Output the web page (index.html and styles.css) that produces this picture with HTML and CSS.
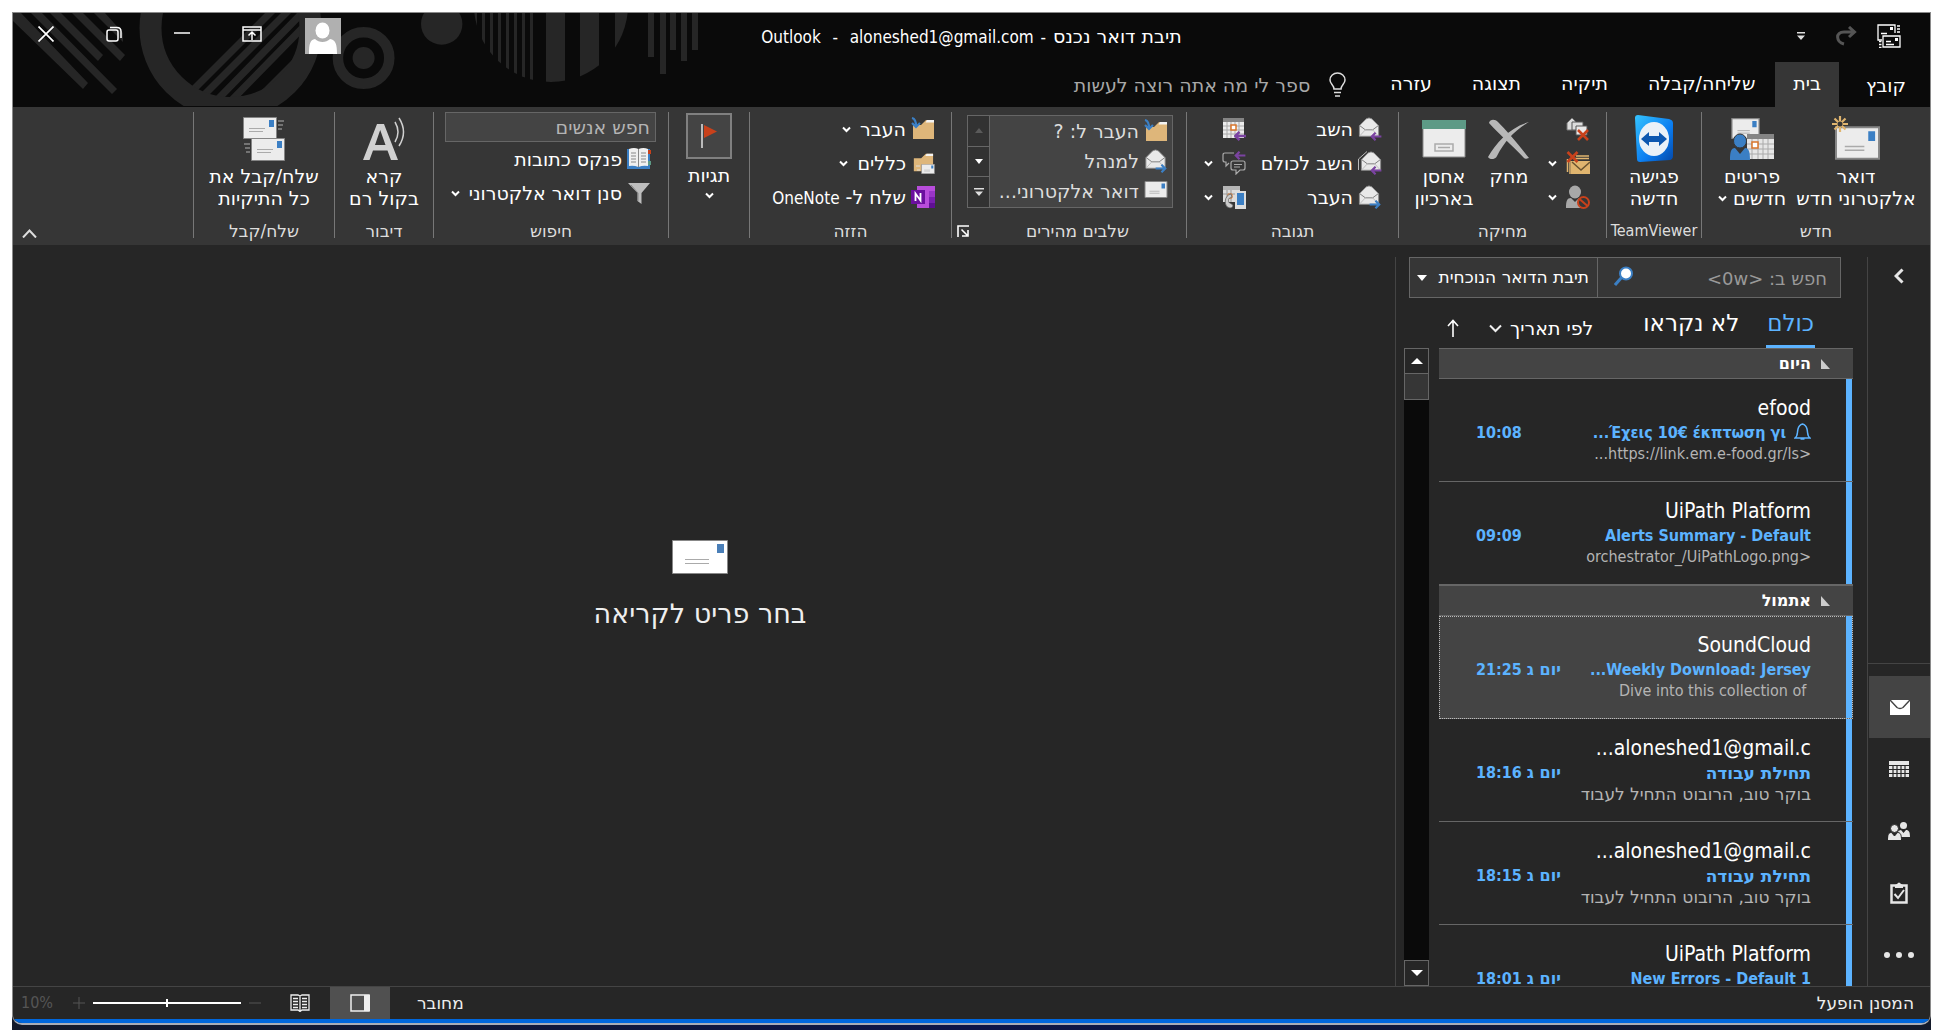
FILE: index.html
```html
<!DOCTYPE html>
<html lang="he" dir="rtl">
<head>
<meta charset="utf-8">
<title>תיבת דואר נכנס - Outlook</title>
<link rel="stylesheet" href="styles.css">
</head>
<body>
<svg class="sprite" aria-hidden="true">
  <symbol id="caret" viewBox="0 0 9 7"><path d="M1 1.500l3.500 3.500L8 1.500" fill="none" stroke="#fff" stroke-width="2"/></symbol>
  <symbol id="open-env" viewBox="0 0 24 24"><path d="M1.500 9.500L9 2q3-2 6 0l7.500 7.500V21h-21z" fill="#e9e9e9" stroke="#8a8a8a"/><path d="M2 9.500l6 4.500h8l6-4.500" fill="none" stroke="#777"/><path d="M8 14L2 20.500M16 14l6 6.500" stroke="#bbb"/></symbol>
  <symbol id="arrow-in" viewBox="0 0 12 10"><path d="M1 5h11M5.500.800L1.300 5l4.200 4.200" fill="none" stroke="#7b43a1" stroke-width="2.400"/></symbol>
  <symbol id="arrow-out" viewBox="0 0 12 10"><path d="M11 5H0M6.500.800L10.700 5 6.500 9.200" fill="none" stroke="#3b7fc4" stroke-width="2.400"/></symbol>
  <symbol id="envelope" viewBox="0 0 46 34"><path d="M1 1h44v32H1z" fill="#ececec" stroke="#858585" stroke-width="2"/><path d="M34 5h7v10h-7z" fill="#3b7fc4"/><path d="M10 20.500h20M10 24.500h20" stroke="#aaa" stroke-width="1.500"/></symbol>
  <symbol id="folder" viewBox="0 0 24 24"><path d="M2 8h8l5-5h8v19H2z" fill="#deb67a"/><path d="M14.500 5.500L16 3h7v2.500z" fill="#f3f3f3"/></symbol>
  <symbol id="redx" viewBox="0 0 12 12"><path d="M1 1l10 10M11 1L1 11" stroke="#c8411b" stroke-width="2.600"/></symbol>
</svg>
<div class="page">
<div class="window">
  <header class="titlebar">
    <svg class="art" viewBox="13 13 720 94" aria-hidden="true">
      <defs>
        <clipPath id="inner"><circle cx="230.500" cy="28" r="70"/></clipPath>
        <clipPath id="disc"><circle cx="551" cy="5" r="77"/></clipPath>
        <clipPath id="flat"><path d="M13 13h720v93H13z"/></clipPath>
      </defs>
      <g fill="#262626">
        <path d="M13 13h8l67 70-5 6-70-68zM31 13h11l75 76-5 5zM50 13h11l42 42-5 6zM72 13h11l42 42-5 6zM94 13h11l18 20v9z"/>
        <path d="M265 13h10l-82 82h-10zM281 13h10l-82 82h-10zM297 13h10l-82 84h-10zM312 13h10l-90 92h-10zM322 30L240 112h40l50-60z" clip-path="url(#inner)"/>
        <g clip-path="url(#disc)"><path d="M474 0h3v90h-3zM482 0h3v90h-3zM490 0h3v90h-3zM498 0h3v90h-3zM506 0h3v90h-3zM514 0h3v90h-3zM522 0h3v90h-3zM530 0h3v90h-3zM546 0h19v90h-19zM580 0h19v90h-19zM615 0h19v90h-19z"/></g>
        <path d="M648 13h6v44h-6zM660 13h6v61h-6zM670 13h6v37h-6zM681 13h6v48h-6zM692 13h6v37h-6z"/>
        <circle cx="441.700" cy="24" r="20.700"/><circle cx="363.600" cy="58" r="11"/>
      </g>
      <g fill="none" stroke="#262626"><circle cx="230.500" cy="28" r="80" stroke-width="22" clip-path="url(#flat)"/><circle cx="363.600" cy="58" r="25.700" stroke-width="10.500"/></g>
    </svg>
    <div class="caption">
      <div class="quick-access">
        <button class="plain" aria-label="שלח/קבל"><svg width="24" height="24" viewBox="0 0 24 24" fill="none" stroke="#fff" stroke-width="1.300"><path d="M5 16H1V1h17v8M4 9.500h6"/><path d="M6 12h17v11H6z"/><path d="M9 17.500h5M9 20.500h8"/><path d="M18 14h3v3h-3zM13 3h3v3h-3z" fill="#fff" stroke="none"/><path d="M20 2h3M20 5h3M20 8h3M2 17.500h2.500M2 20.500h2.500M2 23.300h2.500"/></svg></button>
        <button class="plain" aria-label="בצע שוב"><svg width="22" height="20" viewBox="0 0 22 20" fill="none" stroke="#555" stroke-width="3"><path d="M9 18C1 16 0 6 9 6h10M14 1l5.500 5-5.500 5"/></svg></button>
        <button class="plain" aria-label="התאמה אישית"><svg width="8" height="8" viewBox="0 0 8 8" fill="#ddd"><path d="M0 0h8v1.500H0zM0 3.500h8L4 8z"/></svg></button>
      </div>
      <h1 class="title"><bdi class="he">תיבת דואר נכנס</bdi> - <bdi>aloneshed1@gmail.com</bdi>&nbsp; - &nbsp;<bdi>Outlook</bdi></h1>
      <div class="window-buttons">
        <button class="avatar" aria-label="חשבון"><svg width="36" height="36" viewBox="0 0 36 36"><path d="M0 0h36v36H0z" fill="#b0b0b0"/><ellipse cx="17.500" cy="12.500" rx="7" ry="8" fill="#fff"/><path d="M4 36c0-10 1-14 6-15 4 4 11 4 15 0 6 1 7 6 7 15z" fill="#fff"/></svg></button>
        <button class="plain" aria-label="אפשרויות תצוגת רצועת הכלים"><svg width="20" height="16" viewBox="0 0 20 16" fill="none" stroke="#fff" stroke-width="1.500"><path d="M1 1h18v14H1zM1 4h18M10 14V6.500M6.500 9.500L10 6l3.500 3.500"/></svg></button>
        <button class="plain" aria-label="מזער"><svg width="16" height="16" viewBox="0 0 16 16"><path d="M0 7h16" stroke="#fff" stroke-width="1.500"/></svg></button>
        <button class="plain" aria-label="שחזר"><svg width="16" height="16" viewBox="0 0 16 16" fill="none" stroke="#fff" stroke-width="1.500"><rect x="1" y="4" width="11" height="11" rx="2"/><path d="M4 1.500h7c3 0 4 1 4 4V12"/></svg></button>
        <button class="plain" aria-label="סגור"><svg width="16" height="16" viewBox="0 0 16 16"><path d="M.500.500l15 15M15.500.500l-15 15" stroke="#fff" stroke-width="1.700"/></svg></button>
      </div>
    </div>
    <nav class="tabs">
      <a href="#file">קובץ</a><a href="#home" class="active">בית</a><a href="#sendreceive">שליחה/קבלה</a><a href="#folder-tab">תיקיה</a><a href="#view">תצוגה</a><a href="#help">עזרה</a>
      <button class="tellme"><svg width="17" height="25" viewBox="0 0 17 25" fill="none" stroke="#ddd" stroke-width="1.500"><path d="M5 17c0-4-4-5-4-9a7.500 7 0 0 1 15 0c0 4-4 5-4 9zM5 20.500h7M6 24h5"/></svg>ספר לי מה אתה רוצה לעשות</button>
    </nav>
  </header>

  <section class="ribbon">
    <div class="group g-new">
      <div class="tools">
        <button class="big wide"><span class="pic"><svg width="48" height="46" viewBox="0 0 48 46"><use href="#envelope" x="3" y="10" width="45" height="34"/><path d="M8 0v16M0 8h16M2.500 2.500l11 11M13.500 2.500l-11 11" stroke="#e0b56f" stroke-width="2.200"/><circle cx="8" cy="8" r="2.500" fill="#363636"/></svg></span>דואר<br>אלקטרוני חדש</button>
        <button class="big items"><span class="pic"><svg width="44" height="42" viewBox="0 0 44 42"><use href="#envelope" x="1" y="0" width="29" height="21"/><path d="M17 16h27v25H17z" fill="#e6e6e6"/><path d="M17 16h27v5H17z" fill="#858585"/><path d="M22 21v20M28 21v20M33 21v20M38 21v20M17 26h27M17 31h27M17 36h27" stroke="#aaa"/><path d="M22 24h6v6h-6z" fill="#fff" stroke="#d9762b" stroke-width="1.500"/><ellipse cx="10" cy="23" rx="6.500" ry="7" fill="#3b7fc4" stroke="#363636"/><path d="M0 42c0-8 1-12 5-12l5 6 5-6c4 0 5 4 5 12z" fill="#3b7fc4"/></svg></span>פריטים<br>חדשים <svg class="caret"><use href="#caret"/></svg></button>
      </div>
      <h2>חדש</h2>
    </div>
    <div class="group g-tv">
      <div class="tools">
        <button class="big"><span class="pic"><svg width="40" height="48" viewBox="0 0 40 48"><defs><linearGradient id="tv" x1="0" x2="1" y2="1"><stop offset="0" stop-color="#35c4ff"/><stop offset=".6" stop-color="#0a7cf0"/><stop offset="1" stop-color="#0448a8"/></linearGradient></defs><path d="M1 3q0-3 3-3l31 4q4 1 4 4v33q0 3-3 4L6 47q-3 0-3-3z" fill="url(#tv)"/><ellipse cx="20" cy="24" rx="15" ry="17" fill="#eaf1f8"/><path d="M7 24l8-7v4h10v-4l8 7-8 7v-4H15v4z" fill="#0d57b0"/></svg></span>פגישה<br>חדשה</button>
      </div>
      <h2 class="latin">TeamViewer</h2>
    </div>
    <div class="group g-delete">
      <div class="tools">
        <div class="rows">
          <button class="row" aria-label="התעלם"><svg class="ic" viewBox="0 0 24 24"><path d="M1 6l5-5 5 5v7H1z" fill="#ddd" stroke="#777"/><path d="M6 5h11v8H6z" fill="#ddd" stroke="#555"/><path d="M10 9h11v9H10z" fill="#e9e9e9" stroke="#555"/><use href="#redx" x="11" y="12" width="12" height="12"/></svg></button>
          <button class="row" aria-label="נקה"><svg class="ic" viewBox="0 0 24 24"><path d="M4 23V10M1.500 21V8M10 5h13M8 7.500h15" stroke="#e0b56f" stroke-width="1.500"/><path d="M5 10h19v13H5z" fill="#e0b56f"/><path d="M6 11l9 8 9-8" fill="none" stroke="#6a5430" stroke-width="1.500"/><use href="#redx" x="0" y="0" width="13" height="12"/></svg><svg class="caret"><use href="#caret"/></svg></button>
          <button class="row" aria-label="דואר זבל"><svg class="ic" viewBox="0 0 24 24"><ellipse cx="9" cy="7" rx="6" ry="6.500" fill="#a8a8a8"/><path d="M0 23c0-7 1-10 5-10l4 4 4-4c5 0 6 3 6 10z" fill="#a8a8a8"/><circle cx="17.500" cy="17.500" r="5.500" fill="#363636" stroke="#c8411b" stroke-width="2"/><path d="M13.500 14l8 7" stroke="#c8411b" stroke-width="2"/></svg><svg class="caret"><use href="#caret"/></svg></button>
        </div>
        <button class="big narrow"><span class="pic"><svg width="42" height="40" viewBox="0 0 42 40"><path d="M1 4C2 0 7 0 10 3c8 8 20 22 31 36-3 1-4 1-5 0C24 26 12 16 1 4z" fill="#b8b8b8"/><path d="M41 3C26 12 17 22 9 37c-2 4-7 4-9 1C8 24 22 8 41 3z" fill="#b8b8b8"/></svg></span>מחק</button>
        <button class="big archive"><span class="pic"><svg width="44" height="38" viewBox="0 0 44 38"><path d="M1 8h42v29H1z" fill="#ececec" stroke="#8a8a8a"/><path d="M0 0h44v9H0z" fill="#5d9a86"/><path d="M13 24h18v7H13zM16 27.500h12" fill="none" stroke="#aaa" stroke-width="1.500"/></svg></span>אחסן<br>בארכיון</button>
      </div>
      <h2>מחיקה</h2>
    </div>
    <div class="group g-respond">
      <div class="tools">
        <div class="rows">
          <button class="row"><svg class="ic" viewBox="0 0 24 24"><use href="#open-env" width="22" height="22"/><use href="#arrow-in" x="12" y="15" width="12" height="9"/></svg>השב</button>
          <button class="row"><svg class="ic" viewBox="0 0 24 24"><use href="#open-env" x="2" width="22" height="22"/><path d="M.500 19V8L9 .500" fill="none" stroke="#bbb"/><use href="#arrow-in" x="12" y="15" width="12" height="9"/></svg>השב לכולם</button>
          <button class="row"><svg class="ic" viewBox="0 0 24 24"><use href="#open-env" width="22" height="22"/><use href="#arrow-out" x="11" y="15" width="12" height="9"/></svg>העבר</button>
        </div>
        <div class="rows">
          <button class="row" aria-label="פגישה"><svg class="ic" viewBox="0 0 24 24"><path d="M1 1h21v20H1z" fill="#ececec"/><path d="M1 1h21v4H1z" fill="#858585"/><path d="M5 5v16M9 5v16M13 5v16M17 5v16M1 9h21M1 13h21M1 17h21" stroke="#aaa"/><path d="M9 8h5v5H9z" fill="#fff" stroke="#d9762b" stroke-width="1.500"/><use href="#arrow-in" x="12" y="14" width="12" height="10"/></svg></button>
          <button class="row" aria-label="הודעה מיידית"><svg class="ic" viewBox="0 0 24 24" fill="none" stroke="#aaa" stroke-width="1.200"><path d="M12 2H3Q1 2 1 4v5q0 2 2 2h1v4l3-3"/><path d="M11 10h10q2 0 2 2v5q0 2-2 2h-3l-4 4v-4h-3q-2 0-2-2v-5q0-2 2-2zM12 13.500h8M12 16h6"/><use href="#arrow-in" x="12" y="0" width="12" height="9"/></svg><svg class="caret"><use href="#caret"/></svg></button>
          <button class="row" aria-label="עוד"><svg class="ic" viewBox="0 0 24 24"><path d="M1 1h17v16H1z" fill="#ddd"/><path d="M1 1h17v4H1z" fill="#b5b5b5"/><path d="M5 5v12M9 5v12M1 9h12" stroke="#999"/><path d="M6 9h4v4H6z" fill="#fff" stroke="#d9762b"/><path d="M9 9c-7 1-8 13-1 14 2 0 3-1 3-3l-3-2c-2 0-2-5 0-5l2-1z" fill="#ccc" stroke="#555" stroke-width=".7"/><path d="M14 7h9v16h-9z" fill="#3b7fc4" stroke="#ddd" stroke-width="2"/><path d="M14 20h9v3h-9z" fill="#ddd"/></svg><svg class="caret"><use href="#caret"/></svg></button>
        </div>
      </div>
      <h2>תגובה</h2>
    </div>
    <div class="group g-quick">
      <div class="tools">
        <div class="gallery">
          <div class="steps">
            <button class="row"><svg class="ic" viewBox="0 0 24 24"><use href="#folder" width="24" height="24"/><path d="M1 1c4 1 4 5 4 8M1 6l4 4 4-4" fill="none" stroke="#3b7fc4" stroke-width="2.200"/></svg>העבר ל: ?</button>
            <button class="row"><svg class="ic" viewBox="0 0 24 24"><use href="#open-env" width="23" height="22"/><use href="#arrow-out" x="11" y="15" width="12" height="9"/></svg>למנהל</button>
            <button class="row"><svg class="ic" viewBox="0 0 24 24"><use href="#envelope" y="2" width="24" height="17"/></svg>דואר אלקטרוני...</button>
          </div>
          <div class="spin">
            <button aria-label="למעלה"><svg width="8" height="5" viewBox="0 0 8 5"><path d="M0 5h8L4 0z" fill="#5a5a5a"/></svg></button>
            <button aria-label="למטה"><svg width="8" height="5" viewBox="0 0 8 5"><path d="M0 0h8L4 5z" fill="#fff"/></svg></button>
            <button aria-label="עוד"><svg width="10" height="8" viewBox="0 0 10 8"><path d="M0 0h10v1.500H0zM1 3.500h8L5 8z" fill="#ddd"/></svg></button>
          </div>
        </div>
      </div>
      <div class="label-line"><h2>שלבים מהירים</h2><button class="plain" aria-label="ניהול שלבים מהירים"><svg width="12" height="12" viewBox="0 0 12 12" fill="none" stroke="#fff" stroke-width="1.600"><path d="M1 12V1h11M4.500 4.500l6 6M11 5v6H5"/></svg></button></div>
    </div>
    <div class="group g-move">
      <div class="tools">
        <div class="rows">
          <button class="row"><svg class="ic" viewBox="0 0 24 24"><use href="#folder" width="24" height="24"/><path d="M1 1c4 1 4 5 4 8M1 6l4 4 4-4" fill="none" stroke="#3b7fc4" stroke-width="2.200"/></svg>העבר<svg class="caret"><use href="#caret"/></svg></button>
          <button class="row"><svg class="ic" viewBox="0 0 24 24"><use href="#folder" width="24" height="22"/><use href="#envelope" x="10" y="13" width="14" height="10"/><path d="M5 15h4M6 19h3" stroke="#ddd"/></svg>כללים<svg class="caret"><use href="#caret"/></svg></button>
          <button class="row"><svg class="ic" viewBox="0 0 24 24"><path d="M6 1h18v22H6z" fill="#b84ddb"/><path d="M18 6h6v6h-6z" fill="#9a35c8"/><path d="M18 12h6v6h-6z" fill="#7a1fb0"/><path d="M18 18h6v5h-6z" fill="#5f0f94"/><path d="M0 5h14v14H0z" fill="#6b0f9e"/><path d="M4.500 16V8.500l5 7V8" fill="none" stroke="#fff" stroke-width="1.800"/></svg><span>שלח ל- <span class="latin">OneNote</span></span></button>
        </div>
      </div>
      <h2>הזזה</h2>
    </div>
    <div class="group g-tags">
      <div class="tools">
        <button class="tag"><span class="flagbox"><svg width="16" height="24" viewBox="0 0 16 24"><path d="M0 0h2v24H0z" fill="#bbb"/><path d="M3 1l13 6.500L3 14z" fill="#c8411b"/></svg></span>תגיות<svg class="caret"><use href="#caret"/></svg></button>
      </div>
    </div>
    <div class="group g-search">
      <div class="tools">
        <div class="rows">
          <input class="people" type="text" placeholder="חפש אנשים" aria-label="חפש אנשים">
          <button class="row"><svg class="ic" viewBox="0 0 24 24"><path d="M0 2h23v20H0z" fill="#3b7fc4"/><path d="M21 3h3v4h-3z" fill="#c8411b"/><path d="M21 14h3v4h-3z" fill="#5d9a86"/><path d="M2 2q5-2 9.500 0 5-2 9.500 0v17q-5-1-9.500 1-5-2-9.500-1z" fill="#f0f0f0"/><path d="M11.500 2v18M4 6h5M4 9h5M4 12h5M4 15h5M14 6h5M14 9h5M14 12h5M14 15h5" stroke="#888"/></svg>פנקס כתובות</button>
          <button class="row"><svg class="ic" viewBox="0 0 24 24"><path d="M1 2h22l-8.500 10v11l-4-3v-8z" fill="#bdbdbd"/><path d="M4 4l7 8v8" fill="none" stroke="#888"/></svg>סנן דואר אלקטרוני<svg class="caret"><use href="#caret"/></svg></button>
        </div>
      </div>
      <h2>חיפוש</h2>
    </div>
    <div class="group g-speech">
      <div class="tools">
        <button class="big"><span class="pic"><svg width="42" height="44" viewBox="0 0 42 44"><path d="M0 43L14 7h7l14 36h-7l-3.500-9.500H10L6.500 43zM12 28h10.500L17.200 13z" fill="#d0d0d0"/><path d="M32 5q6 10 0 20M36 1q9 14 0 28" fill="none" stroke="#d0d0d0" stroke-width="1.500"/></svg></span>קרא<br>בקול רם</button>
      </div>
      <h2>דיבור</h2>
    </div>
    <div class="group g-send">
      <div class="tools">
        <button class="big"><span class="pic"><svg width="42" height="44" viewBox="0 0 42 44"><path d="M.500.500h33v21h-33zM8.500 21.500h33v22h-33z" fill="#ececec" stroke="#858585"/><path d="M26 3h5v7h-5zM34 24h5v7h-5z" fill="#3b7fc4"/><path d="M6 11.500h16M6 14.500h14M14 32.500h16M14 35.500h14" stroke="#aaa"/><path d="M35 4h6M35 8h5M35 12h4M1 27h6M2 31h5M3 35h4" stroke="#888" stroke-width="1.500"/></svg></span>שלח/קבל את<br>כל התיקיות</button>
      </div>
      <h2>שלח/קבל</h2>
    </div>
    <div class="rest"><button class="plain" aria-label="כווץ את רצועת הכלים"><svg width="15" height="9" viewBox="0 0 15 9"><path d="M1 8.500l6.500-7 6.500 7" fill="none" stroke="#ddd" stroke-width="2"/></svg></button></div>
  </section>

  <main class="workspace">
    <nav class="rail">
      <button class="expand" aria-label="הרחב"><svg width="10" height="16" viewBox="0 0 10 16"><path d="M8.500 1.500L2 8l6.500 6.500" fill="none" stroke="#e6e6e6" stroke-width="3"/></svg></button>
      <div class="modules">
        <a href="#mail" class="on" aria-label="דואר"><svg width="20" height="16" viewBox="0 0 20 16"><path d="M0 1h20v15H0z" fill="#fff"/><path d="M0 1l7 7.500q3 2 6 0L20 1" fill="none" stroke="#444" stroke-width="1.500"/></svg></a>
        <a href="#calendar" aria-label="לוח שנה"><svg width="20" height="16" viewBox="0 0 20 16"><path d="M0 0h20v16H0z" fill="#e6e6e6"/><path d="M0 4.500h20M0 8.500h20M0 12.500h20M4 4v12M8 4v12M12 4v12M16 4v12" stroke="#262626" stroke-width="1.200"/></svg></a>
        <a href="#people" aria-label="אנשים"><svg width="22" height="18" viewBox="0 0 22 18" fill="#e6e6e6"><circle cx="15.500" cy="3.500" r="3.500"/><path d="M10 9l3-1 2.500 3L18 8c3 0 4 2 4 7h-9z"/><g stroke="#262626"><circle cx="6.500" cy="6.500" r="4"/><path d="M-.5 18.500c0-6 1-8 4-8l3 3.500 3-3.500c3 0 4 2 4 8z"/></g></svg></a>
        <a href="#tasks" aria-label="משימות"><svg width="18" height="22" viewBox="0 0 18 22"><path d="M1.500 3.500h15v17h-15z" fill="none" stroke="#e6e6e6" stroke-width="2.500"/><path d="M5 6V3l2-1q2-3 4 0l2 1v3z" fill="#e6e6e6"/><path d="M4.500 12l3.500 4 6-8" fill="none" stroke="#e6e6e6" stroke-width="2"/></svg></a>
        <a href="#more" aria-label="עוד"><svg width="30" height="6" viewBox="0 0 30 6" fill="#e6e6e6"><circle cx="3" cy="3" r="3"/><circle cx="15" cy="3" r="3"/><circle cx="27" cy="3" r="3"/></svg></a>
      </div>
    </nav>

    <section class="listpane">
      <form class="search">
        <input type="text" placeholder="חפש ב: &lt;0w&gt;" aria-label="חפש">
        <button type="button" class="plain" aria-label="בצע חיפוש"><svg width="20" height="20" viewBox="0 0 20 20"><path d="M1 19l7-8" stroke="#3b7fc4" stroke-width="3"/><circle cx="12" cy="7.500" r="6" fill="#fff" stroke="#3b7fc4" stroke-width="2"/></svg></button>
        <div class="scope"><select aria-label="טווח חיפוש"><option>תיבת הדואר הנוכחית</option></select><svg width="10" height="6" viewBox="0 0 10 6"><path d="M0 0h10L5 6z" fill="#fff"/></svg></div>
      </form>
      <div class="filters">
        <button class="filter on">כולם</button><button class="filter">לא נקראו</button>
        <button class="sort">לפי תאריך<svg width="13" height="9" viewBox="0 0 13 9"><path d="M1 1.500l5.500 5.500L12 1.500" fill="none" stroke="#eee" stroke-width="2"/></svg></button>
        <button class="order" aria-label="הפוך סדר"><svg width="12" height="18" viewBox="0 0 12 18"><path d="M6 18V2M1 7l5-5.500L11 7" fill="none" stroke="#fff" stroke-width="1.600"/></svg></button>
      </div>
      <div class="listwrap">
        <div class="list">
          <h3><svg width="9" height="10" viewBox="0 0 9 10"><path d="M0 0v10h9z" fill="#ccc"/></svg>היום</h3>
          <ul>
            <li><p class="from">efood</p><p class="subj latin"><svg class="bell" width="17" height="18" viewBox="0 0 17 18" fill="none" stroke="#5cb3ff" stroke-width="1.500"><path d="M1 15c3-2 2-5 3-9q1-4 4.500-5 3.500 1 4.500 5c1 4 0 7 3 9zM6.500 16h4"/></svg>Έχεις 10€ έκπτωση γι...</p><time>10:08</time><p class="peek latin">&lt;https://link.em.e-food.gr/ls...</p></li>
            <li><p class="from">UiPath Platform</p><p class="subj latin">Alerts Summary - Default</p><time>09:09</time><p class="peek latin">&lt;orchestrator_/UiPathLogo.png</p></li>
          </ul>
          <h3><svg width="9" height="10" viewBox="0 0 9 10"><path d="M0 0v10h9z" fill="#ccc"/></svg>אתמול</h3>
          <ul>
            <li class="selected"><p class="from">SoundCloud</p><p class="subj latin">Weekly Download: Jersey...</p><time><span class="day">יום ג</span> 21:25</time><p class="peek latin">&nbsp;Dive into this collection of</p></li>
            <li><p class="from">aloneshed1@gmail.c...</p><p class="subj">תחילת עבודה</p><time><span class="day">יום ג</span> 18:16</time><p class="peek">בוקר טוב, הרובוט התחיל לעבוד</p></li>
            <li><p class="from">aloneshed1@gmail.c...</p><p class="subj">תחילת עבודה</p><time><span class="day">יום ג</span> 18:15</time><p class="peek">בוקר טוב, הרובוט התחיל לעבוד</p></li>
            <li><p class="from">UiPath Platform</p><p class="subj latin">New Errors - Default 1</p><time><span class="day">יום ג</span> 18:01</time></li>
          </ul>
        </div>
        <div class="scroll">
          <button aria-label="גלול למעלה"><svg width="12" height="6" viewBox="0 0 12 6"><path d="M0 6h12L6 0z" fill="#fff"/></svg></button>
          <div class="thumb"></div>
          <button class="down" aria-label="גלול למטה"><svg width="12" height="6" viewBox="0 0 12 6"><path d="M0 0h12L6 6z" fill="#fff"/></svg></button>
        </div>
      </div>
    </section>

    <section class="reading">
      <svg width="56" height="34" viewBox="0 0 56 34"><path d="M.500.500h55v33H.500z" fill="#fff" stroke="#888"/><path d="M45 4h7v9h-7z" fill="#4a7fb8"/><path d="M13 19.500h24M13 23.500h24" stroke="#aaa"/></svg>
      <p>בחר פריט לקריאה</p>
    </section>
  </main>

  <footer class="status">
    <span class="filter-state">המסנן הופעל</span>
    <span class="conn">מחובר</span>
    <button class="view on" aria-label="תצוגה רגילה"><svg width="20" height="18" viewBox="0 0 20 18"><path d="M1 1h18v16H1z" fill="none" stroke="#eee" stroke-width="1.500"/><path d="M14 1h6v16h-6z" fill="#eee"/></svg></button>
    <button class="view" aria-label="תצוגת קריאה"><svg width="20" height="18" viewBox="0 0 20 18" fill="none" stroke="#eee" stroke-width="1.300"><path d="M1 1h7l2 1 2-1h7v15h-7l-2 1.500L8 16H1zM10 2v15M3 4.500h5M3 7.500h5M3 10.500h5M3 13.500h5M12 4.500h5M12 7.500h5M12 10.500h5M12 13.500h5"/></svg></button>
    <span class="zoom"><button class="plain" aria-label="הקטן"><svg width="12" height="12" viewBox="0 0 12 12"><path d="M0 6h12" stroke="#555"/></svg></button><input type="range" aria-label="מרחק מתצוגה" min="0" max="100" value="50"><button class="plain" aria-label="הגדל"><svg width="12" height="12" viewBox="0 0 12 12"><path d="M0 6h12M6 0v12" stroke="#555"/></svg></button></span>
    <span class="percent latin">10%</span>
  </footer>
</div>
</div>
</body>
</html>
```
FILE: styles.css
```css
* { box-sizing: border-box; }
body {
  margin: 0;
  background: #fff linear-gradient(to right, #141a2a, #0d1548 50%, #141a2a) no-repeat center bottom / calc(100% - 23px) 14px;
  color: #fff;
  font-family: "DejaVu Sans", sans-serif;
  font-size: 17px;
  line-height: 22px;
}
h1, h2, h3, p, ul { margin: 0; padding: 0; font-weight: 400; }
ul { list-style: none; }
a { color: inherit; text-decoration: none; }
button, input, select { font: inherit; color: inherit; border: 0; background: none; padding: 0; margin: 0; }
svg { display: block; flex: none; }
.sprite { position: absolute; width: 0; height: 0; }
.plain { display: flex; align-items: center; }
.latin, .title, .from, time { font-family: "DejaVu Sans Condensed", "DejaVu Sans", sans-serif; }

.page { height: 100vh; min-height: 700px; padding: 12px 11px 5px 12px; display: flex; flex-direction: column; }
.window {
  flex: 1;
  min-height: 0;
  display: flex;
  flex-direction: column;
  background: #262626;
  border: 1px solid #8a8a8a;
  border-bottom: 2px solid #a8adb8;
  border-radius: 0 0 10px 10px;
  overflow: hidden;
}

/* title bar */
.titlebar { position: relative; background: #0a0a0a; flex: none; }
.art { position: absolute; left: 0; top: 0; width: 720px; height: 94px; }
.caption { position: relative; display: grid; grid-template-columns: 1fr auto 1fr; grid-template-rows: 49px; }
.quick-access { display: flex; align-items: center; gap: 20px; padding: 0 29px 4px 0; }
.quick-access button:last-child { margin-right: 10px; }
.title { font-size: 17px; align-self: center; padding-bottom: 3px; white-space: nowrap; }
.title bdi { margin: 0 2px; }
.title .he { font-family: "DejaVu Sans", sans-serif; font-size: 19px; }
.window-buttons { display: flex; align-items: center; justify-content: flex-end; padding: 0 0 3px 25px; gap: 52px; }
.avatar { margin-left: -9px; }
.window-buttons .plain { padding-bottom: 4px; }
.tabs { position: relative; height: 45px; display: flex; padding-right: 24px; font-size: 19px; }
.tabs a { display: flex; align-items: center; padding: 0 20px 3px; }
.tabs a:first-child { padding: 0 0 0 27px; }
.tabs .active { background: #363636; padding: 0 18px 3px; }
.tellme { display: flex; align-items: center; gap: 19px; color: #a8a8a8; margin-right: 24px; }

/* ribbon */
.ribbon { flex: none; height: 138px; padding: 5px 0 7px; background: #363636; display: flex; font-size: 19px; }
.group { flex: none; display: flex; flex-direction: column; border-left: 1px solid #777; }
.tools { flex: 1; display: flex; min-height: 0; align-items: flex-start; }
.group h2 { font-size: 17px; line-height: 14px; text-align: center; color: #ddd; }
.group h2.latin { font-size: 16px; }
.g-new { width: 229px; } .g-new .tools { padding-right: 12px; }
.g-tv { width: 95px; }
.g-delete { width: 208px; }
.g-respond { width: 212px; }
.g-quick { width: 235px; } .g-quick .tools { padding-right: 13px; }
.g-move { width: 202px; }
.g-tags { width: 81px; }
.g-search { width: 235px; }
.g-speech { width: 99px; }
.g-send { width: 141px; }
.g-tv .tools, .g-speech .tools, .g-send .tools, .g-tags .tools { justify-content: center; }
.big { line-height: 22px; white-space: nowrap; text-align: center; }
.pic { height: 53px; display: flex; align-items: center; justify-content: center; }
.wide { width: 124px; } .items { width: 84px; } .narrow { width: 54px; } .archive { width: 76px; }
.caret { width: 9px; height: 7px; }
.big .caret { display: inline-block; vertical-align: 3px; }
.rows { display: flex; flex-direction: column; padding-right: 16px; }
.row { display: flex; align-items: center; gap: 5px; height: 34px; white-space: nowrap; }
.row .caret { margin-right: 4px; }
.row .latin { font-size: 17px; }
.ic { width: 24px; height: 24px; }
.g-delete .rows { width: 70px; }
.g-respond .rows:first-child { width: 152px; }
.g-respond .rows:last-child { padding-right: 0; }
.g-search .rows { padding-right: 12px; }
.people { width: 211px; height: 30px; background: #444; border: 1px solid #666; padding: 0 5px; }
.people::placeholder { color: #b4b4b4; opacity: 1; }
.g-search .row { padding-right: 5px; }
.gallery { display: flex; width: 206px; margin-top: 3px; border: 1px solid #666; background: #444; color: #ddd; }
.steps { flex: 1; padding: 0 4px 1px 0; }
.steps .row { height: 30px; }
.spin { width: 22px; background: #323232; border-right: 1px solid #666; display: flex; flex-direction: column; }
.spin button { flex: 1; display: flex; align-items: center; justify-content: center; }
.spin button + button { border-top: 1px solid #666; }
.label-line { display: flex; align-items: center; padding-left: 5px; }
.label-line h2 { flex: 1; }
.tag { display: flex; flex-direction: column; align-items: center; line-height: 22px; }
.tag .caret { margin-top: 6px; }
.flagbox { width: 46px; height: 46px; margin: 1px 0 5px; background: #444; border: 2px solid #808080; display: flex; align-items: center; justify-content: center; }
.rest { flex: 1; display: flex; align-items: flex-end; justify-content: flex-end; padding-left: 9px; }

/* workspace */
.workspace { flex: 1; min-height: 0; display: flex; padding-top: 12px; }
.rail { width: 63px; flex: none; border-left: 1px solid #444; display: flex; flex-direction: column; justify-content: space-between; align-items: stretch; }
.expand { display: flex; justify-content: center; padding-top: 11px; }
.modules { border-top: 1px solid #444; padding-top: 12px; }
.modules a { height: 62px; display: flex; align-items: center; justify-content: center; }
.modules .on { background: #444; margin-left: 1px; }
.listpane { width: 472px; flex: none; border-left: 1px solid #444; display: flex; flex-direction: column; }
.search { display: flex; height: 41px; flex: none; margin: 0 26px 0 13px; border: 1px solid #666; background: #363636; }
.search input { flex: 1; min-width: 0; padding: 2px 13px 0 0; font-size: 18px; }
.search input::placeholder { color: #999; opacity: 1; }
.search .plain { padding: 0 0 4px 16px; }
.scope { width: 188px; border-right: 1px solid #666; display: flex; align-items: center; padding-left: 7px; }
.scope select { flex: 1; min-width: 0; appearance: none; padding: 0 8px 1px 0; height: 36px; }
.filters { flex: none; height: 50px; display: flex; padding: 0 52px 0 51px; align-items: stretch; }
.filter { font-size: 23px; line-height: 28px; padding: 6px 1px 3px; border-bottom: 3px solid transparent; }
.filter.on { color: #5cb3ff; border-color: #5cb3ff; }
.filter + .filter { margin-right: 26px; }
.sort { display: flex; align-items: center; gap: 8px; font-size: 19px; padding-top: 10px; margin-right: auto; }
.order { padding-top: 10px; margin-right: 30px; }
.listwrap { flex: 1; min-height: 0; display: flex; gap: 10px; padding: 0 14px 0 8px; }
.list { flex: 1; min-width: 0; overflow: hidden; }
.list h3 { height: 31px; background: #444; border-top: 1px solid #666; border-bottom: 1px solid #666; display: flex; align-items: center; gap: 10px; padding-right: 23px; font-size: 16px; font-weight: 700; }
.list li {
  position: relative;
  height: 103px;
  border-bottom: 1px solid #666;
  display: grid;
  grid-template-columns: 225px 1fr;
  grid-template-rows: 29px 20px 22px;
  padding: 15px 42px 0 37px;
  white-space: nowrap;
}
.list li::before { content: ""; position: absolute; right: 1px; top: 0; bottom: 0; width: 6px; background: #5cb3ff; }
.list .selected { background: #444; outline: 1px dotted #bbb; outline-offset: -1px; }
.from { grid-column: 1 / -1; font-size: 21px; line-height: 28px; }
.subj, .list time { font-weight: 700; color: #5cb3ff; line-height: 20px; }
.subj { display: flex; gap: 8px; }
.subj.latin, .peek.latin, .list time { font-size: 16px; }
.day { font-family: "DejaVu Sans", sans-serif; }
.list time { text-align: left; }
.peek { grid-column: 1 / -1; color: #b4b4b4; line-height: 22px; }
.scroll { width: 25px; background: #0a0a0a; display: flex; flex-direction: column; }
.scroll button { height: 26px; border: 1px solid #666; background: #262626; display: flex; align-items: center; justify-content: center; }
.thumb { height: 26px; background: #363636; border: 1px solid #666; border-top: 0; }
.scroll .down { margin-top: auto; }
.reading { flex: 1; min-width: 0; display: flex; flex-direction: column; align-items: center; justify-content: center; gap: 22px; padding: 0 8px 72px 0; }
.reading p { font-size: 27px; line-height: 36px; color: #eee; }

/* status bar */
.status { flex: none; height: 37px; display: flex; align-items: stretch; line-height: 32px; color: #eee; border-top: 1px solid #444; border-bottom: 4px solid #0067dd; padding: 0 16px 0 8px; }
.conn { margin: 0 auto 0 27px; }
.view { width: 60px; display: flex; align-items: center; justify-content: center; }
.view.on { background: #505050; }
.zoom { display: flex; align-items: center; gap: 8px; padding-right: 9px; }
.percent { color: #555; margin-right: 20px; font-size: 16px; }
input[type="range"] { appearance: none; width: 148px; height: 12px; }
input[type="range"]::-webkit-slider-runnable-track { height: 2px; background: #fff; }
input[type="range"]::-webkit-slider-thumb { appearance: none; width: 2px; height: 8px; margin-top: -3px; background: #fff; }
```
